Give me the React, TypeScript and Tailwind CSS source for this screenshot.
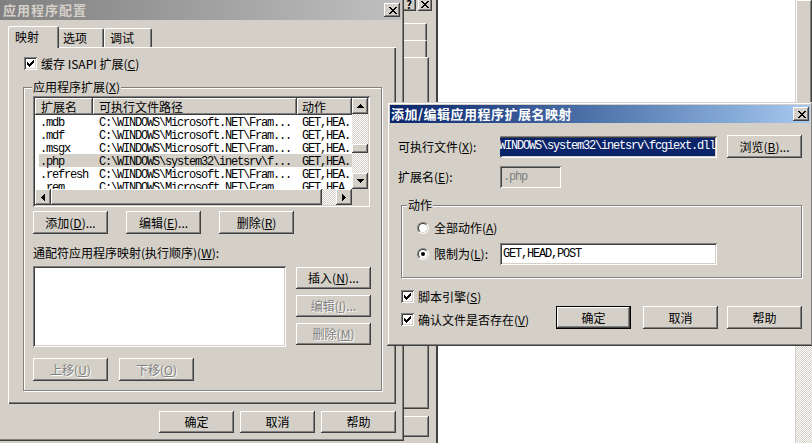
import React from "react";

// classic Windows bevels
const raised =
  "shadow-[inset_-1px_-1px_0_#404040,inset_1px_1px_0_#ffffff,inset_-2px_-2px_0_#808080,inset_2px_2px_0_#d4d0c8]";
const thin = "shadow-[inset_-1px_-1px_0_#404040,inset_1px_1px_0_#ffffff,inset_-2px_-2px_0_#808080]";
const sunken =
  "shadow-[inset_1px_1px_0_#808080,inset_-1px_-1px_0_#ffffff,inset_2px_2px_0_#404040,inset_-2px_-2px_0_#d4d0c8]";
const frame =
  "shadow-[inset_-1px_-1px_0_#404040,inset_1px_1px_0_#d4d0c8,inset_-2px_-2px_0_#808080,inset_2px_2px_0_#ffffff]";
const mono = "font-['Liberation_Mono',monospace] text-[12px] tracking-[-1.2px]";
const grayed = "text-[#808080] [text-shadow:1px_1px_0_#ffffff]";
const dither = "bg-[image:repeating-conic-gradient(#d4d0c8_0_25%,#ffffff_0_50%)] bg-[length:2px_2px]";

const U = ({ c }: { c: string }) => <span className="underline underline-offset-[1px]">{c}</span>;

const Btn = ({
  children,
  size = "w-[75px] h-[23px]",
  off = false,
  def = false,
}: {
  children: React.ReactNode;
  size?: string;
  off?: boolean;
  def?: boolean;
}) => (
  <div
    className={`${size} shrink-0 flex items-center justify-center bg-[#d4d0c8] ${raised} ${
      def ? "border border-black" : ""
    } ${off ? grayed : ""}`}
  >
    {children}
  </div>
);

const CloseGlyph = () => (
  <svg width="8" height="7" viewBox="0 0 8 7" shapeRendering="crispEdges">
    <path
      d="M0 0h2v1H0z M6 0h2v1H6z M1 1h2v1H1z M5 1h2v1H5z M2 2h4v1H2z M3 3h2v1H3z M2 4h4v1H2z M1 5h2v1H1z M5 5h2v1H5z M0 6h2v1H0z M6 6h2v1H6z"
      fill="#000"
    />
  </svg>
);

const CloseBtn = () => (
  <div className={`w-[16px] h-[14px] bg-[#d4d0c8] ${raised} flex items-center justify-center pl-[1px] pt-[1px]`}>
    <CloseGlyph />
  </div>
);

const Check = () => (
  <div className={`w-[13px] h-[13px] shrink-0 bg-white ${sunken} flex items-center justify-center`}>
    <svg width="7" height="7" viewBox="0 0 7 7" shapeRendering="crispEdges">
      <path
        d="M0 2h1v3H0z M1 3h1v3H1z M2 4h1v3H2z M3 3h1v3H3z M4 2h1v3H4z M5 1h1v3H5z M6 0h1v3H6z"
        fill="#000"
      />
    </svg>
  </div>
);

const Radio = ({ on = false }: { on?: boolean }) => (
  <div className="w-[12px] h-[12px] shrink-0 rounded-full border border-[#808080] border-r-white border-b-white">
    <div className="w-full h-full rounded-full border border-[#404040] border-r-[#d4d0c8] border-b-[#d4d0c8] bg-white flex items-center justify-center">
      {on && <div className="w-[4px] h-[4px] rounded-full bg-black" />}
    </div>
  </div>
);

const Arrow = ({ dir }: { dir: "up" | "down" | "left" | "right" }) => {
  const d = {
    up: "M3 0h1v1H3z M2 1h3v1H2z M1 2h5v1H1z M0 3h7v1H0z",
    down: "M0 0h7v1H0z M1 1h5v1H1z M2 2h3v1H2z M3 3h1v1H3z",
    left: "M3 0h1v7H3z M2 1h1v5H2z M1 2h1v3H1z M0 3h1v1H0z",
    right: "M0 0h1v7H0z M1 1h1v5H1z M2 2h1v3H2z M3 3h1v1H3z",
  }[dir];
  const vert = dir === "up" || dir === "down";
  return (
    <svg width={vert ? 7 : 4} height={vert ? 4 : 7} viewBox={vert ? "0 0 7 4" : "0 0 4 7"} shapeRendering="crispEdges">
      <path d={d} fill="#000" />
    </svg>
  );
};

const ScrollBtn = ({ dir }: { dir: "up" | "down" | "left" | "right" }) => (
  <div className={`w-[16px] h-[16px] shrink-0 bg-[#d4d0c8] ${raised} flex items-center justify-center`}>
    <Arrow dir={dir} />
  </div>
);

const extRows = [
  [".mdb", "C:\\WINDOWS\\Microsoft.NET\\Fram...", "GET,HEA..."],
  [".mdf", "C:\\WINDOWS\\Microsoft.NET\\Fram...", "GET,HEA..."],
  [".msgx", "C:\\WINDOWS\\Microsoft.NET\\Fram...", "GET,HEA..."],
  [".php", "C:\\WINDOWS\\system32\\inetsrv\\f...", "GET,HEA..."],
  [".refresh", "C:\\WINDOWS\\Microsoft.NET\\Fram...", "GET,HEA..."],
  [".rem", "C:\\WINDOWS\\Microsoft.NET\\Fram...", "GET,HEA..."],
];

const HeaderCell = ({ children, cls }: { children: React.ReactNode; cls: string }) => (
  <div className={`${cls} h-[17px] shrink-0 bg-[#d4d0c8] ${thin} flex items-center`}>{children}</div>
);

function ExtList() {
  return (
    <div className={`w-[337px] h-[111px] bg-white p-[2px] ${sunken} flex flex-col`}>
      <div className="flex flex-1 min-h-0">
        <div className="flex-1 min-w-0 overflow-hidden">
          <div className="flex">
            <HeaderCell cls="w-[58px] pl-[6px]">扩展名</HeaderCell>
            <HeaderCell cls="w-[204px] pl-[6px]">可执行文件路径</HeaderCell>
            <HeaderCell cls="w-[55px] pl-[5px]">动作</HeaderCell>
          </div>
          {extRows.map(([ext, path, act], i) => (
            <div
              key={ext}
              className={`ml-[4px] flex h-[13px] leading-[17px] whitespace-nowrap ${mono} ${
                i === 3 ? "bg-[#d4d0c8]" : ""
              }`}
            >
              <div className="w-[54px] pl-[1px] shrink-0">{ext}</div>
              <div className="w-[204px] pl-[6px] shrink-0">{path}</div>
              <div className="pl-[5px]">{act}</div>
            </div>
          ))}
        </div>
        <div className="w-[16px] flex flex-col">
          <ScrollBtn dir="up" />
          <div className={`flex-1 ${dither}`}>
            <div className={`mt-[30px] h-[9px] bg-[#d4d0c8] ${raised}`} />
          </div>
          <ScrollBtn dir="down" />
        </div>
      </div>
      <div className="flex h-[16px]">
        <ScrollBtn dir="left" />
        <div className={`flex-1 flex ${dither}`}>
          <div className={`w-[271px] h-[16px] bg-[#d4d0c8] ${raised}`} />
        </div>
        <ScrollBtn dir="right" />
        <div className="w-[16px] bg-[#d4d0c8]" />
      </div>
    </div>
  );
}

function BackWindows() {
  return (
    <>
      {/* property sheet behind, only its right edge shows */}
      <div className="absolute left-[392px] top-0 w-[45px] h-[443px] flex flex-col items-start">
        <div className="ml-[10px] h-[11px] flex items-end gap-[2px] overflow-hidden">
          <div className={`w-[14px] h-[14px] bg-[#d4d0c8] ${raised} flex items-center justify-center text-[11px] font-bold leading-none`}>
            ?
          </div>
          <div className={`w-[14px] h-[14px] bg-[#d4d0c8] ${raised} flex items-center justify-center`}>
            <CloseGlyph />
          </div>
        </div>
        <div className="mt-[12px] w-[35px] h-[17px] border-t border-white border-r border-r-[#404040] shadow-[inset_-1px_0_0_#808080]" />
        <div className="w-[35px] h-[17px] border-t border-white border-r border-r-[#404040] shadow-[inset_-1px_0_0_#808080]" />
        <div className="w-[37px] h-[352px] border-t border-white border-r border-b border-r-[#404040] border-b-[#404040] shadow-[inset_-1px_-1px_0_#808080]" />
        <div className={`mt-[7px] w-[37px] h-[21px] ${raised}`} />
      </div>

      {/* list window on the right */}
      <div className="absolute left-[436px] top-0 w-[376px] h-[443px] bg-white border-l-2 border-l-[#404040] flex justify-end">
        <div className={`w-[17px] h-full border-l border-l-[#d4d0c8] ${dither}`}>
          <div className={`h-[320px] bg-[#d4d0c8] ${raised}`} />
        </div>
      </div>
    </>
  );
}

function AppConfigDialog() {
  return (
    <div className={`absolute left-[-3px] top-[-3px] w-[407px] h-[444px] bg-[#d4d0c8] p-[3px] ${frame} flex flex-col`}>
      <div className="h-[20px] shrink-0 flex items-center justify-between pl-[3px] pr-[1px] bg-linear-to-r from-[#808080] to-[#c0c0c0]">
        <span className="text-[13px] font-bold text-[#d4d0c8] tracking-[1px]">应用程序配置</span>
        <CloseBtn />
      </div>

      {/* tabs */}
      <div className="ml-[8px] mt-[6px] h-[21px] flex items-end">
        <div className="relative z-10 -mb-[1px] w-[51px] h-[22px] bg-[#d4d0c8] border-l border-t border-r border-white border-r-[#404040] rounded-t-[2px] shadow-[inset_-1px_0_0_#808080] pl-[6px] pt-[3px]">
          映射
        </div>
        <div className="w-[45px] h-[19px] border-t border-r border-white border-r-[#404040] rounded-tr-[2px] shadow-[inset_-1px_0_0_#808080] pl-[4px] pt-[2px]">
          选项
        </div>
        <div className="w-[48px] h-[19px] border-l border-t border-r border-white border-r-[#404040] rounded-t-[2px] shadow-[inset_-1px_0_0_#808080] pl-[5px] pt-[2px]">
          调试
        </div>
      </div>

      {/* tab page */}
      <div className="ml-[8px] w-[388px] h-[357px] border-l border-t border-white shadow-[inset_-1px_-1px_0_#404040,inset_-2px_-2px_0_#808080] pl-[14px] pt-[9px]">
        <div className="ml-[1px] h-[13px] flex items-center gap-[4px]">
          <Check />
          <span>
            缓存 ISAPI 扩展(<U c="C" />)
          </span>
        </div>

        <div className="relative mt-[17px] w-[359px] h-[304px] border border-[#808080] shadow-[1px_1px_0_#ffffff,inset_1px_1px_0_#ffffff] pl-[9px] pt-[8px]">
          <span className="absolute left-[8px] -top-[8px] px-[1px] bg-[#d4d0c8]">
            应用程序扩展(<U c="X" />)
          </span>
          <ExtList />
          <div className="mt-[4px] flex gap-[18px]">
            <Btn>
              添加(<U c="D" />)...
            </Btn>
            <Btn>
              编辑(<U c="E" />)...
            </Btn>
            <Btn>
              删除(<U c="R" />)
            </Btn>
          </div>
          <div className="mt-[12px] h-[14px]">
            通配符应用程序映射(执行顺序)(<U c="W" />):
          </div>
          <div className="mt-[6px] flex gap-[10px]">
            <div className={`w-[253px] h-[81px] bg-white ${sunken}`} />
            <div className="mt-[1px] flex flex-col gap-[6px]">
              <Btn size="w-[75px] h-[22px]">
                插入(<U c="N" />)...
              </Btn>
              <Btn size="w-[75px] h-[22px]" off>
                编辑(<U c="I" />)...
              </Btn>
              <Btn size="w-[75px] h-[22px]" off>
                删除(<U c="M" />)
              </Btn>
            </div>
          </div>
          <div className="mt-[11px] flex gap-[11px]">
            <Btn off>
              上移(<U c="U" />)
            </Btn>
            <Btn off>
              下移(<U c="O" />)
            </Btn>
          </div>
        </div>
      </div>

      <div className="mt-[7px] pr-[5px] flex justify-end gap-[6px]">
        <Btn size="w-[75px] h-[22px]">确定</Btn>
        <Btn size="w-[75px] h-[22px]">取消</Btn>
        <Btn size="w-[75px] h-[22px]">帮助</Btn>
      </div>
    </div>
  );
}

function MappingDialog() {
  return (
    <div className={`absolute z-20 left-[387px] top-[102px] w-[426px] h-[244px] bg-[#d4d0c8] p-[3px] ${frame} flex flex-col`}>
      <div className="h-[18px] shrink-0 flex items-center justify-between pl-[1px] pr-[1px] bg-linear-to-r from-[#0a246a] to-[#a6caf0]">
        <span className="text-[13px] font-bold text-white tracking-[0.5px]">添加/编辑应用程序扩展名映射</span>
        <CloseBtn />
      </div>

      <div className="pl-[8px] pr-[8px] flex flex-col">
        <div className="mt-[12px] h-[23px] flex items-center">
          <div className="w-[102px]">
            可执行文件(<U c="X" />):
          </div>
          <div className={`w-[217px] h-[22px] bg-white ${sunken} p-[2px] flex justify-end overflow-hidden`}>
            <span className={`${mono} leading-[17px] bg-[#0a246a] text-white whitespace-nowrap`}>
              WINDOWS\system32\inetsrv\fcgiext.dll
            </span>
          </div>
          <div className="ml-[10px]">
            <Btn>
              浏览(<U c="B" />)...
            </Btn>
          </div>
        </div>

        <div className="mt-[7px] h-[23px] flex items-center">
          <div className="w-[102px]">
            扩展名(<U c="E" />):
          </div>
          <div className={`w-[61px] h-[22px] ${sunken} pl-[3px] flex items-center ${mono} text-[#808080]`}>.php</div>
        </div>

        <div className="relative ml-[3px] mt-[17px] w-[401px] h-[73px] border border-[#808080] shadow-[1px_1px_0_#ffffff,inset_1px_1px_0_#ffffff] pl-[15px] pt-[15px]">
          <span className="absolute left-[5px] -top-[8px] px-[1px] bg-[#d4d0c8]">动作</span>
          <div className="h-[14px] flex items-center gap-[5px]">
            <Radio />
            <span>
              全部动作(<U c="A" />)
            </span>
          </div>
          <div className="mt-[8px] h-[22px] flex items-center">
            <Radio on />
            <span className="ml-[5px] w-[66px]">
              限制为(<U c="L" />):
            </span>
            <div className={`w-[217px] h-[22px] bg-white ${sunken} pl-[3px] flex items-center ${mono}`}>GET,HEAD,POST</div>
          </div>
        </div>

        <div className="mt-[12px] flex items-start">
          <div className="ml-[3px] flex flex-col gap-[10px]">
            <div className="h-[13px] flex items-center gap-[4px]">
              <Check />
              <span>
                脚本引擎(<U c="S" />)
              </span>
            </div>
            <div className="h-[13px] flex items-center gap-[4px]">
              <Check />
              <span>
                确认文件是否存在(<U c="V" />)
              </span>
            </div>
          </div>
          <div className="ml-auto mt-[16px] flex">
            <Btn size="w-[75px] h-[23px]" def>
              确定
            </Btn>
            <div className="ml-[12px]">
              <Btn size="w-[75px] h-[23px]">取消</Btn>
            </div>
            <div className="ml-[9px]">
              <Btn size="w-[75px] h-[23px]">帮助</Btn>
            </div>
          </div>
        </div>
      </div>
    </div>
  );
}

export default function App() {
  return (
    <div className="relative w-[812px] h-[443px] overflow-hidden bg-[#d4d0c8] font-['Noto_Sans_CJK_SC',sans-serif] text-[12px] leading-[14px] text-black">
      <BackWindows />
      <AppConfigDialog />
      <MappingDialog />
    </div>
  );
}
